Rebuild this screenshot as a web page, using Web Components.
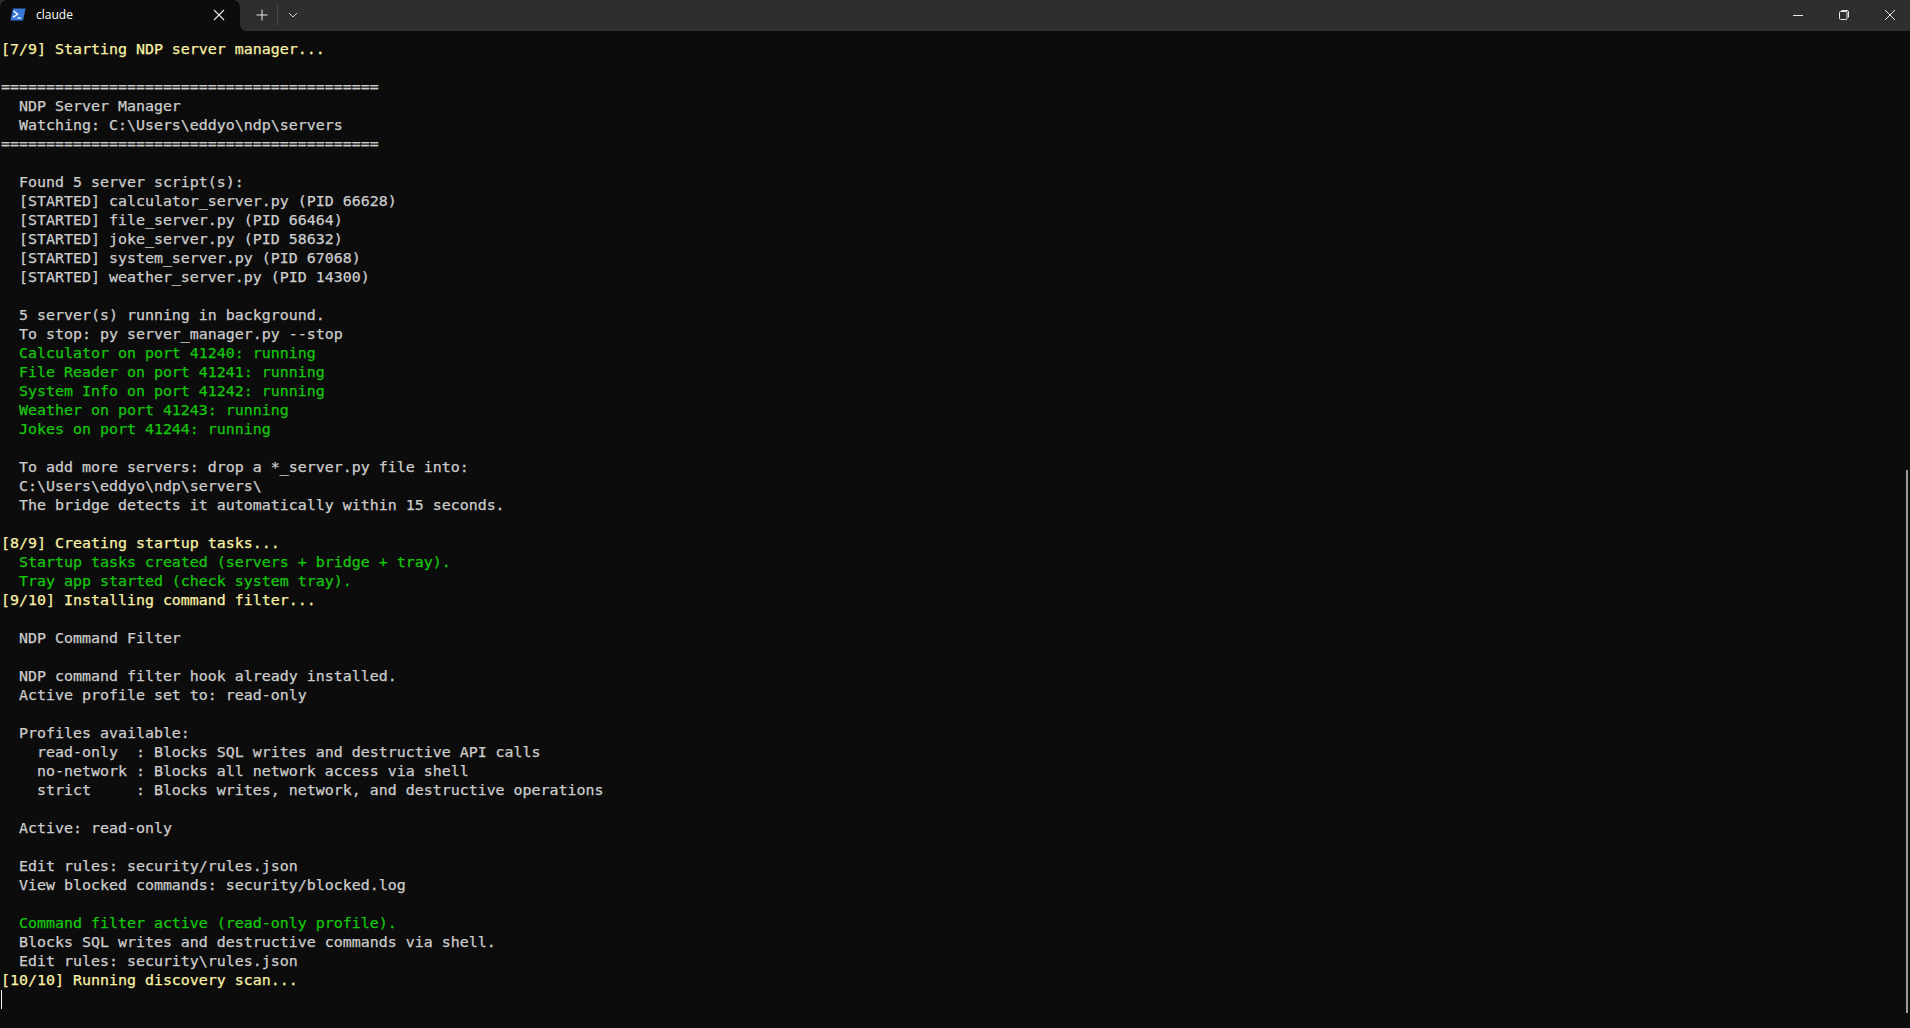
<!DOCTYPE html>
<html>
<head>
<meta charset="utf-8">
<title>claude</title>
<style>
  html, body { margin: 0; height: 100%; background: #0c0c0c; overflow: hidden; }
</style>
</head>
<body>
<terminal-window>
  <title-bar slot="bar" label="claude"></title-bar>
  <term-line tone="head">[7/9] Starting NDP server manager...</term-line>
  <term-line></term-line>
  <term-line>==========================================</term-line>
  <term-line>  NDP Server Manager</term-line>
  <term-line>  Watching: C:\Users\eddyo\ndp\servers</term-line>
  <term-line>==========================================</term-line>
  <term-line></term-line>
  <term-line>  Found 5 server script(s):</term-line>
  <term-line>  [STARTED] calculator_server.py (PID 66628)</term-line>
  <term-line>  [STARTED] file_server.py (PID 66464)</term-line>
  <term-line>  [STARTED] joke_server.py (PID 58632)</term-line>
  <term-line>  [STARTED] system_server.py (PID 67068)</term-line>
  <term-line>  [STARTED] weather_server.py (PID 14300)</term-line>
  <term-line></term-line>
  <term-line>  5 server(s) running in background.</term-line>
  <term-line>  To stop: py server_manager.py --stop</term-line>
  <term-line tone="ok">  Calculator on port 41240: running</term-line>
  <term-line tone="ok">  File Reader on port 41241: running</term-line>
  <term-line tone="ok">  System Info on port 41242: running</term-line>
  <term-line tone="ok">  Weather on port 41243: running</term-line>
  <term-line tone="ok">  Jokes on port 41244: running</term-line>
  <term-line></term-line>
  <term-line>  To add more servers: drop a *_server.py file into:</term-line>
  <term-line>  C:\Users\eddyo\ndp\servers\</term-line>
  <term-line>  The bridge detects it automatically within 15 seconds.</term-line>
  <term-line></term-line>
  <term-line tone="head">[8/9] Creating startup tasks...</term-line>
  <term-line tone="ok">  Startup tasks created (servers + bridge + tray).</term-line>
  <term-line tone="ok">  Tray app started (check system tray).</term-line>
  <term-line tone="head">[9/10] Installing command filter...</term-line>
  <term-line></term-line>
  <term-line>  NDP Command Filter</term-line>
  <term-line></term-line>
  <term-line>  NDP command filter hook already installed.</term-line>
  <term-line>  Active profile set to: read-only</term-line>
  <term-line></term-line>
  <term-line>  Profiles available:</term-line>
  <term-line>    read-only  : Blocks SQL writes and destructive API calls</term-line>
  <term-line>    no-network : Blocks all network access via shell</term-line>
  <term-line>    strict     : Blocks writes, network, and destructive operations</term-line>
  <term-line></term-line>
  <term-line>  Active: read-only</term-line>
  <term-line></term-line>
  <term-line>  Edit rules: security/rules.json</term-line>
  <term-line>  View blocked commands: security/blocked.log</term-line>
  <term-line></term-line>
  <term-line tone="ok">  Command filter active (read-only profile).</term-line>
  <term-line>  Blocks SQL writes and destructive commands via shell.</term-line>
  <term-line>  Edit rules: security\rules.json</term-line>
  <term-line tone="head">[10/10] Running discovery scan...</term-line>
  <term-line cursor></term-line>
</terminal-window>

<script>
class TerminalWindow extends HTMLElement {
  constructor() {
    super();
    this.shadowDOM = this.attachShadow({ mode: "open" });
    this.shadowDOM.innerHTML = `
    <style>
      :host {
        display: flex;
        flex-direction: column;
        height: 100vh;
        background: #0c0c0c;
      }
      .body {
        position: relative;
        flex: 1;
        display: flex;
        flex-direction: column;
        padding: 9px 0 0 1px;
        overflow: hidden;
      }
      .thumb {
        position: absolute;
        right: 2px;
        top: 439px;
        bottom: 15px;
        width: 2px;
        background: #9b9b9b;
      }
    </style>
    <slot name="bar"></slot>
    <div class="body">
      <slot></slot>
      <div class="thumb"></div>
    </div>
    `;
  }
}

class TitleBar extends HTMLElement {
  constructor() {
    super();
    this.shadowDOM = this.attachShadow({ mode: "open" });
  }

  connectedCallback() {
    this.shadowDOM.innerHTML = `
    <style>
      :host {
        display: flex;
        align-items: flex-end;
        height: 31px;
        flex: none;
        background: #2e2e2e;
        color: #fff;
        font-family: "Segoe UI", "Open Sans", "Noto Sans", sans-serif;
      }
      svg { display: block; }
      .tab {
        position: relative;
        display: flex;
        align-items: center;
        width: 240px;
        height: 31px;
        box-sizing: border-box;
        padding: 0 0 2px 10px;
        background: #0c0c0c;
        border-radius: 7px 7px 0 0;
        flex: none;
      }
      .tab::after {
        content: "";
        position: absolute;
        right: -6px;
        bottom: 0;
        width: 6px;
        height: 6px;
        background: radial-gradient(circle at 100% 0, transparent 5.5px, #0c0c0c 6px);
      }
      .name {
        flex: 1;
        margin-left: 10px;
        font-size: 12px;
      }
      .close { margin-right: 15px; }
      .actions {
        display: flex;
        align-items: center;
        height: 31px;
        padding-left: 16px;
        padding-bottom: 2px;
        box-sizing: border-box;
      }
      .sep { width: 1px; height: 22px; background: #454545; margin: 0 10px 0 9px; }
      .spacer { flex: 1; }
      .win {
        display: flex;
        align-items: center;
        height: 31px;
        padding-right: 15px;
        gap: 36px;
        padding-bottom: 2px;
        box-sizing: border-box;
      }
    </style>
    <div class="tab">
      <svg width="16" height="13" viewBox="0 0 16 13">
        <path d="M3 0.5H15.6L13 12.5H0.4Z" fill="#3a78d8"/>
        <path d="M3.6 3L7.6 6.2L3 9.4" fill="none" stroke="#fff" stroke-width="1.3"/>
        <path d="M7.5 10H11" stroke="#fff" stroke-width="1.2"/>
      </svg>
      <span class="name">${this.getAttribute("label")}</span>
      <svg class="close" width="12" height="12" viewBox="0 0 12 12">
        <path d="M1 1L11 11M11 1L1 11" stroke="#e8e8e8" stroke-width="1.1"/>
      </svg>
    </div>
    <div class="actions">
      <svg width="12" height="12" viewBox="0 0 12 12">
        <path d="M6 0.5V11.5M0.5 6H11.5" stroke="#e8e8e8" stroke-width="1"/>
      </svg>
      <div class="sep"></div>
      <svg width="10" height="6" viewBox="0 0 10 6">
        <path d="M1 1L5 5L9 1" fill="none" stroke="#d0d0d0" stroke-width="1"/>
      </svg>
    </div>
    <div class="spacer"></div>
    <div class="win">
      <svg width="10" height="10" viewBox="0 0 10 10">
        <path d="M0 5.5H10" stroke="#e8e8e8" stroke-width="1"/>
      </svg>
      <svg width="10" height="10" viewBox="0 0 10 10">
        <rect x="0.5" y="1.5" width="7.5" height="8" rx="1" fill="none" stroke="#e8e8e8"/>
        <path d="M2.5 0.5H8A1.5 1.5 0 0 1 9.5 2V7.5" fill="none" stroke="#e8e8e8"/>
      </svg>
      <svg width="10" height="10" viewBox="0 0 10 10">
        <path d="M0 0L10 10M10 0L0 10" stroke="#e8e8e8" stroke-width="1"/>
      </svg>
    </div>
    `;
  }
}

class TermLine extends HTMLElement {
  constructor() {
    super();
    this.shadowDOM = this.attachShadow({ mode: "open" });
    this.shadowDOM.innerHTML = `
    <style>
      :host {
        display: block;
        flex: none;
        height: 19px;
        line-height: 19px;
        font-family: "DejaVu Sans Mono", monospace;
        font-size: 14.95px;
        -webkit-text-stroke: 0.25px currentColor;
        color: #cccccc;
      }
      :host([tone="head"]) { color: #f9f1a5; }
      :host([tone="ok"]) { color: #16c60c; }
      .text { white-space: pre; }
      .cursor {
        display: none;
        width: 1px;
        height: 19px;
        background: #f2f2f2;
      }
      :host([cursor]) .cursor { display: block; }
      :host([cursor]) .text { display: none; }
    </style>
    <div class="text"><slot></slot></div>
    <div class="cursor"></div>
    `;
  }
}

customElements.define("terminal-window", TerminalWindow);
customElements.define("title-bar", TitleBar);
customElements.define("term-line", TermLine);
</script>
</body>
</html>
